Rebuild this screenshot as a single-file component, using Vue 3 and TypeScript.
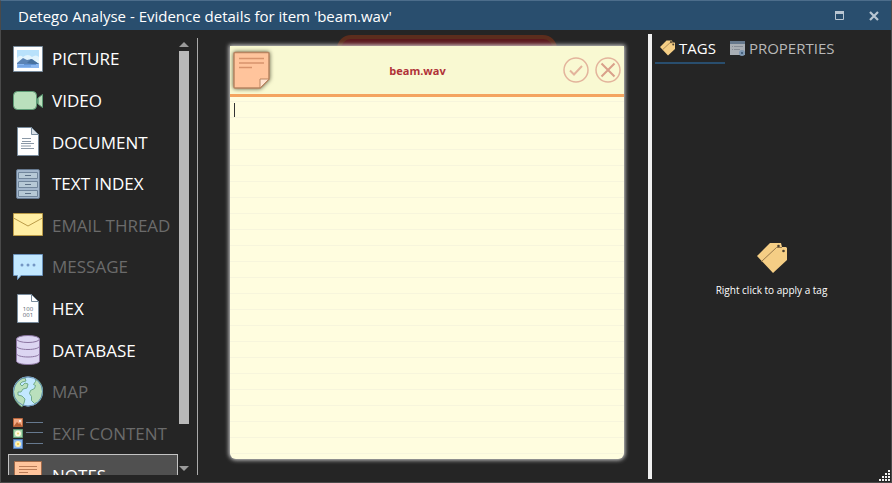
<script setup lang="ts">
import { ref } from 'vue'

interface ViewItem {
  id: string
  label: string
  enabled: boolean
}

const views: ViewItem[] = [
  { id: 'picture', label: 'PICTURE', enabled: true },
  { id: 'video', label: 'VIDEO', enabled: true },
  { id: 'document', label: 'DOCUMENT', enabled: true },
  { id: 'index', label: 'TEXT INDEX', enabled: true },
  { id: 'email', label: 'EMAIL THREAD', enabled: false },
  { id: 'message', label: 'MESSAGE', enabled: false },
  { id: 'hex', label: 'HEX', enabled: true },
  { id: 'database', label: 'DATABASE', enabled: true },
  { id: 'map', label: 'MAP', enabled: false },
  { id: 'exif', label: 'EXIF CONTENT', enabled: false },
  { id: 'notes', label: 'NOTES', enabled: true },
]

const selected = ref('notes')
const tab = ref<'tags' | 'properties'>('tags')
const note = ref('')
</script>

<template>
  <div class="window">
    <header class="titlebar">
      <h1>Detego Analyse - Evidence details for item 'beam.wav'</h1>
      <button class="win-btn" type="button" aria-label="Maximize">
        <svg width="10" height="10" viewBox="0 0 10 10"><path d="M.5 .5h8v8h-8z" fill="none" stroke="#b9c6d2" /><path d="M0 0h9v3H0z" fill="#b9c6d2" /></svg>
      </button>
      <button class="win-btn" type="button" aria-label="Close">
        <svg width="10" height="10" viewBox="0 0 10 10"><path d="M1 1l8 8M9 1L1 9" stroke="#b9c6d2" stroke-width="2.2" /></svg>
      </button>
    </header>

    <div class="body">
      <nav class="side">
        <div class="list-clip">
          <div class="list">
            <button
              v-for="v in views"
              :key="v.id"
              type="button"
              class="item"
              :class="{ selected: selected === v.id }"
              :disabled="!v.enabled"
              @click="selected = v.id"
            >
              <svg class="icon" viewBox="0 0 32 32" width="32" height="32">
                <g v-if="v.id === 'picture'">
                  <path d="M1.5 3.5h29v25h-29z" fill="#fff" stroke="#788b9c" />
                  <path d="M5 7h22v18H5z" fill="#b8e1fb" />
                  <path d="M5 15q3-4 6-1 5-4 9 0 4-3 7 0v6H5z" fill="#e2f4fd" />
                  <path d="M5 20l6-5 4 2 5-1 7 5v2H5z" fill="#5b83b5" />
                  <path d="M15 20l4-4 8 5v1z" fill="#46709f" />
                  <path d="M5 21h22v4H5z" fill="#8bb7f0" />
                  <path d="M6 23h13M12 21.5h12" stroke="#5f91d4" />
                </g>
                <g v-else-if="v.id === 'video'">
                  <path d="M26 14l4.500-3.500v13L26 20z" fill="#bae0bd" stroke="#5e9c76" />
                  <path d="M24.500 14.500h2v5h-2z" fill="#5e9c76" />
                  <rect x="1.500" y="7.500" width="23" height="18" rx="4" fill="#bae0bd" stroke="#5e9c76" />
                </g>
                <g v-else-if="v.id === 'document'">
                  <path d="M5.500 1.500h14l7 7v21h-21z" fill="#fff" stroke="#788b9c" />
                  <path d="M19.500 1.500v7h7z" fill="#d9e0e7" stroke="#788b9c" />
                  <path d="M10 12.500h9M10 15.500h9M9 17.500h13M9 20h10M9 22.500h13" stroke="#8a98a6" />
                </g>
                <g v-else-if="v.id === 'index'">
                  <rect x="4.500" y="1.500" width="23" height="29" rx="1.500" fill="#a3b7cc" stroke="#66798f" />
                  <path d="M6.500 4.500h19v6h-19zM6.500 13.500h19v6h-19zM6.500 22.500h19v6h-19z" fill="#b6c9d6" stroke="#71869c" />
                  <path d="M13 7.500h6M13 16.500h6M13 25.500h6" stroke="#5d7187" />
                </g>
                <g v-else-if="v.id === 'email'">
                  <path d="M1.500 4.500h29v22h-29z" fill="#ffeea3" stroke="#ba9b48" />
                  <path d="M1.500 9L16 17l14.500-8" fill="none" stroke="#ba9b48" />
                </g>
                <g v-else-if="v.id === 'message'">
                  <path d="M1.500 3.500h29v21H9l-3.500 4v-4h-4z" fill="#c2e8ff" stroke="#6c94bd" />
                  <circle cx="10" cy="14" r="1.500" fill="#7496c4" />
                  <circle cx="16" cy="14" r="1.500" fill="#7496c4" />
                  <circle cx="22" cy="14" r="1.500" fill="#7496c4" />
                </g>
                <g v-else-if="v.id === 'hex'">
                  <path d="M5.500 1.500h14l7 7v21h-21z" fill="#fff" stroke="#788b9c" />
                  <path d="M19.500 1.500v7h7z" fill="#fff" stroke="#788b9c" />
                  <text x="16" y="18" class="bits">100</text>
                  <text x="16" y="24" class="bits">001</text>
                </g>
                <g v-else-if="v.id === 'database'">
                  <path d="M4.500 5v22c0 2 5 3.500 11.500 3.500S27.500 29 27.500 27V5" fill="#dcd5f2" stroke="#8b75a1" />
                  <ellipse cx="16" cy="5" rx="11.500" ry="3.500" fill="#dcd5f2" stroke="#8b75a1" />
                  <path d="M4.500 12c0 2 5 3.500 11.500 3.500S27.500 14 27.500 12M4.500 19.500c0 2 5 3.500 11.500 3.500s11.500-1.500 11.500-3.500" fill="none" stroke="#8b75a1" />
                </g>
                <g v-else-if="v.id === 'map'">
                  <circle cx="16" cy="15.500" r="15" fill="#c2e8ff" />
                  <path d="M1.500 16C2 10 5 5 10 2.500L13 2l1 3-4 1-2 2 2 2 3-3 3 1-1 4-4 1-2 3-3 0 0 3 4 1 3 3-1 4-2 4C4 27 1 21 1.500 16z" fill="#bae0bd" stroke="#5e9c76" stroke-width=".8" />
                  <path d="M24 3c5 3 7 8 6.500 14-.5 4-2 7-5 9.500l-3 1-3-3 0-4-2-3 1-3 4-2 1-3-2-1 2-3z" fill="#bae0bd" stroke="#5e9c76" stroke-width=".8" />
                  <circle cx="16" cy="15.500" r="14.500" fill="none" stroke="#648fb5" />
                </g>
                <g v-else-if="v.id === 'exif'">
                  <path d="M1.500 .5h9v8h-9z" fill="#f2a882" stroke="#b9663c" />
                  <path d="M2 8l3-4 2 2 1-1 2 3z" fill="#b55f35" />
                  <circle cx="8" cy="3" r="1" fill="#fff" />
                  <path d="M1.500 11.500h9v8h-9z" fill="#a3d3a7" stroke="#5e9c76" />
                  <circle cx="6" cy="15.500" r="3" fill="#fffbe0" />
                  <circle cx="6" cy="15.500" r="1" fill="#f0d070" />
                  <path d="M1.500 21.500h9v9h-9z" fill="#8bb7f0" stroke="#4e7ab5" />
                  <circle cx="6" cy="26" r="3" fill="#fff3b0" />
                  <circle cx="6" cy="26" r="1" fill="#f0c040" />
                  <path d="M14 4.500h17M14 14.500h17M14 25.500h17" stroke="#66798f" />
                </g>
                <g v-else>
                  <path d="M2.500 2.500h27v19l-8 8h-19z" fill="#ffc49c" stroke="#a16a4a" />
                  <path d="M7 7.500h18M7 10.500h18M7 13.500h9" stroke="#b97b57" />
                </g>
              </svg>
              <span>{{ v.label }}</span>
            </button>
          </div>
        </div>
        <div class="scrollbar" aria-hidden="true">
          <svg width="10" height="5" viewBox="0 0 10 5"><path d="M0 5l5-5 5 5z" fill="#9a9a9a" /></svg>
          <div class="thumb"></div>
          <svg width="10" height="5" viewBox="0 0 10 5"><path d="M0 0l5 5 5-5z" fill="#9a9a9a" /></svg>
        </div>
      </nav>

      <main class="stage">
        <div class="behind"></div>
        <section class="note">
          <header class="note-head">
            <svg class="note-icon" width="40" height="40" viewBox="0 0 40 40">
              <path d="M3 2.500h33q1 0 1 1V29l-9 9H3q-1 0-1-1V3.500q0-1 1-1z" fill="#ffc49c" stroke="#b98561" stroke-width="1.500" />
              <path d="M28 38v-9h9z" fill="#ffe3d0" stroke="#b98561" />
              <path d="M7 8.500h25M7 13h25M7 17.500h13" stroke="#d8936c" stroke-width="1.500" />
            </svg>
            <h2>beam.wav</h2>
            <button type="button" aria-label="Save note">
              <svg width="26" height="26" viewBox="0 0 26 26" fill="none" stroke="#e3b49c"><circle cx="13" cy="13" r="12" stroke-width="1.500" /><path d="M7 13.500l4 4L19 9" stroke-width="2" /></svg>
            </button>
            <button type="button" aria-label="Discard note">
              <svg width="26" height="26" viewBox="0 0 26 26" fill="none" stroke="#e3b49c"><circle cx="13" cy="13" r="12" stroke-width="1.500" /><path d="M6.500 6.500l13 13M19.500 6.500l-13 13" stroke="#d9a08a" stroke-width="2" /></svg>
            </button>
          </header>
          <div class="paper">
            <textarea v-model="note" aria-label="Note text"></textarea>
            <i class="caret"></i>
          </div>
        </section>
      </main>

      <aside class="panel">
        <div class="tabs" role="tablist">
          <button type="button" role="tab" :class="{ active: tab === 'tags' }" :aria-selected="tab === 'tags'" @click="tab = 'tags'">
            <svg width="16" height="16" viewBox="0 0 32 32">
              <path d="M0 14L13 1h11l1 4h4l1 1v12L16 31z" fill="#f5ce85" />
              <path d="M5 19.500L20 5.500H26" fill="none" stroke="#97784a" stroke-width="1.500" />
              <circle cx="22" cy="4" r="2" fill="#4b4030" />
              <circle cx="26.500" cy="9" r="2" fill="#4b4030" />
            </svg>
            <span>TAGS</span>
          </button>
          <button type="button" role="tab" :class="{ active: tab === 'properties' }" :aria-selected="tab === 'properties'" @click="tab = 'properties'">
            <svg width="16" height="16" viewBox="0 0 16 16">
              <path d="M0 1h15v14H0z" fill="#a9aeb4" />
              <path d="M0 1h15v3H0z" fill="#66788c" />
              <path d="M2 6.500h1M4 6.500h9M2 9.500h1M4 9.500h6" stroke="#858c95" />
              <circle cx="12" cy="13" r="3" fill="#7f98b3" />
              <circle cx="12" cy="13" r="1" fill="#35506e" />
            </svg>
            <span>PROPERTIES</span>
          </button>
        </div>
        <div class="empty">
          <svg width="32" height="32" viewBox="0 0 32 32">
            <path d="M1 14L14 1h11l1 4h4l1 1v12L17 31z" fill="#f5ce85" />
            <path d="M5.500 19.500L20.500 5.500H26" fill="none" stroke="#97784a" />
            <circle cx="22.500" cy="4" r="1.300" fill="#4b4030" />
            <circle cx="27.500" cy="9" r="1.300" fill="#4b4030" />
          </svg>
          <p>Right click to apply a tag</p>
        </div>
      </aside>
    </div>
    <svg class="grip" width="12" height="12" viewBox="0 0 12 12" fill="#f2f2f2">
      <path d="M9 0h2v2H9zM6 3h2v2H6zM9 3h2v2H9zM3 6h2v2H3zM6 6h2v2H6zM9 6h2v2H9zM0 9h2v2H0zM3 9h2v2H3zM6 9h2v2H6zM9 9h2v2H9z" />
    </svg>
  </div>
</template>

<style>
body {
  background: #252525;
}
</style>

<style scoped>
.window {
  position: relative;
  box-sizing: border-box;
  height: 100vh;
  display: flex;
  flex-direction: column;
  border: 1px solid #4a4a4a;
  border-top-color: #4c6d8b;
  background: #252525;
  color: #fff;
  font-family: "Segoe UI", "Open Sans", "Noto Sans", sans-serif;
}
button {
  font: inherit;
  color: inherit;
  background: none;
  border: 0;
  padding: 0;
}
h1, h2, p {
  margin: 0;
}
svg {
  display: block;
  flex: none;
}
.titlebar {
  flex: none;
  height: 29px;
  display: flex;
  align-items: center;
  background: #294e6e;
}
.titlebar h1 {
  flex: 1;
  padding-left: 17px;
  font-size: 15px;
  font-weight: 400;
  line-height: 28px;
  white-space: nowrap;
}
.win-btn {
  width: 34px;
  height: 28px;
  display: grid;
  place-items: center;
}
.body {
  flex: 1;
  min-height: 0;
  display: grid;
  grid-template-columns: 197px 1fr 243px;
}
.side {
  min-height: 0;
  display: flex;
  gap: 1px;
  margin: 8px 0 7px 7px;
  border-right: 1px solid #aaa;
}
.list-clip {
  width: 170px;
  overflow: hidden;
}
.list {
  height: 458px;
  display: grid;
  grid-template-rows: repeat(11, 1fr);
}
.item {
  display: flex;
  align-items: center;
  gap: 8px;
  padding: 0 3px;
  border: 1px solid transparent;
  font-size: 17px;
  text-align: left;
  white-space: nowrap;
}
.item:disabled {
  color: #6b6b6b;
}
.item.selected {
  background: #505050;
  border-color: #c4c4c4;
}
.bits {
  font: 6px "Open Sans", sans-serif;
  text-anchor: middle;
  fill: #55606c;
}
.scrollbar {
  width: 10px;
  display: flex;
  flex-direction: column;
  gap: 4px;
  padding: 4px 0;
}
.thumb {
  flex: 1;
  margin-bottom: 38px;
  background: #b9b9b9;
}
.stage {
  position: relative;
  min-height: 0;
  display: flex;
  padding: 16px 24px 23px 32px;
}
.behind {
  position: absolute;
  top: 5px;
  right: 91px;
  left: 139px;
  height: 40px;
  box-sizing: border-box;
  border: 4px solid #5c2d1d;
  border-radius: 14px;
  background: #5b191e;
}
.note {
  position: relative;
  flex: 1;
  display: flex;
  flex-direction: column;
  border-radius: 0 0 6px 6px;
  overflow: hidden;
  background: #fffddf;
  box-shadow: 0 0 4px 1px #d8d8d8;
}
.note-head {
  height: 48px;
  display: flex;
  align-items: center;
  gap: 6px;
  padding: 0 3px 0 2px;
  background: #f9f9d2;
  border-bottom: 3px solid #f4a460;
}
.note-head h2 {
  flex: 1;
  font-size: 11px;
  font-weight: 700;
  text-align: center;
  color: #b03238;
}
.note-icon {
  filter: drop-shadow(0 0 2px #55553c);
}
.paper {
  position: relative;
  flex: 1;
  display: flex;
}
.paper textarea {
  flex: 1;
  border: 0;
  outline: 0;
  resize: none;
  padding: 5px;
  background: repeating-linear-gradient(transparent 0 4px, #f7f5dc 4px 5px, transparent 5px 16px);
  font: 12px/16px "Open Sans", sans-serif;
  color: #333;
}
.caret {
  position: absolute;
  top: 6px;
  left: 4px;
  width: 1px;
  height: 14px;
  background: #333;
}
.panel {
  display: flex;
  flex-direction: column;
  margin: 4px 0 3px;
  border-left: 4px solid #f0f0f0;
}
.tabs {
  display: flex;
  padding-left: 3px;
}
.tabs button {
  height: 30px;
  display: flex;
  align-items: center;
  gap: 3px;
  padding: 0 9px 0 5px;
  border-bottom: 2px solid transparent;
  font-size: 15px;
  color: #b8b8b8;
}
.tabs button.active {
  color: #fff;
  border-color: #294e6e;
}
.empty {
  flex: 1;
  display: flex;
  flex-direction: column;
  align-items: center;
  justify-content: center;
  gap: 8px;
  padding-bottom: 4px;
  font-size: 10px;
  line-height: 16px;
}
.grip {
  position: absolute;
  right: 0;
  bottom: 0;
}
</style>
